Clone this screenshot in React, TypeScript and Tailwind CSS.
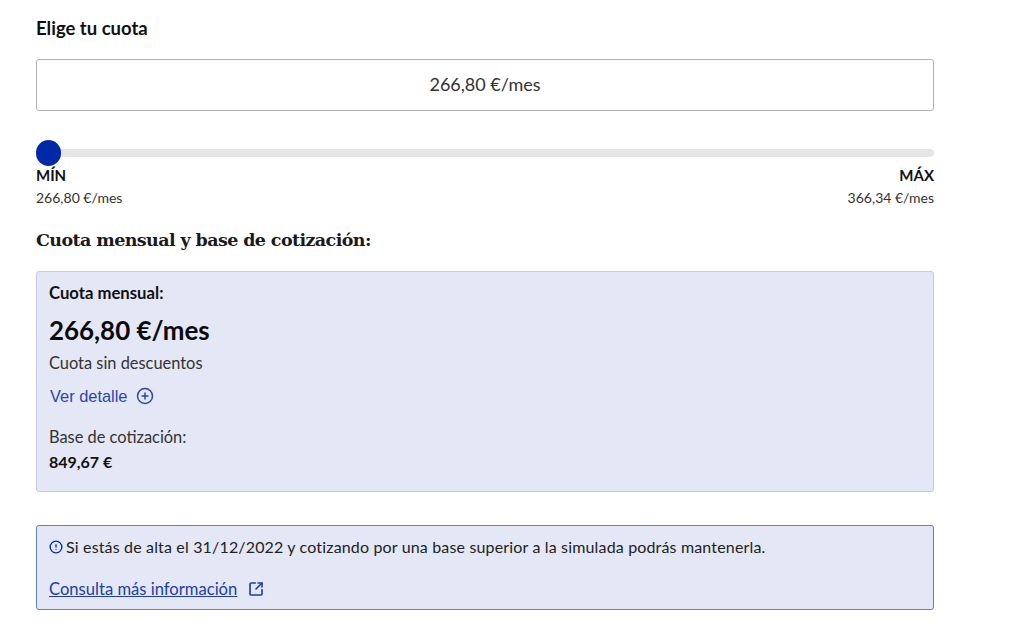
import { CirclePlus, CircleAlert, SquareArrowOutUpRight } from 'lucide-react'

export default function App() {
  return (
    <div className="w-[1024px] h-[637px] overflow-hidden bg-white pl-9 pt-[17px] font-['Lato',sans-serif] text-[#1a1a1a]">
      <div className="w-[898px]">
        <h2 className="text-[18.5px] leading-[22px] font-bold text-[#111]">Elige tu cuota</h2>

        {/* Importe */}
        <div className="mt-[20px] h-[52px] pb-[2px] flex items-center justify-center rounded-[3px] border border-[#b3b3b3] text-lg text-[#333]">
          266,80 €/mes
        </div>

        {/* Slider */}
        <div className="mt-[29px] h-[26px] flex items-center relative">
          <div className="w-full h-2 rounded-full bg-[#e5e5e5]" />
          <div className="absolute left-0 top-0 w-[25px] h-[26px] rounded-full bg-[#0029a8]" />
        </div>
        <div className="-mt-px flex justify-between">
          <div>
            <p className="text-[15px] leading-[20px] font-bold text-[#111]">MÍN</p>
            <p className="mt-[3px] text-sm leading-[20px] text-[#333]">266,80 €/mes</p>
          </div>
          <div className="text-right">
            <p className="text-[15px] leading-[20px] font-bold text-[#111]">MÁX</p>
            <p className="mt-[3px] text-sm leading-[20px] text-[#333]">366,34 €/mes</p>
          </div>
        </div>

        <h3 className="mt-[20px] text-[17.5px] leading-[24px] font-bold text-[#1a1a1a] font-['DejaVu_Serif',serif] tracking-[-0.6px]">
          Cuota mensual y base de cotización:
        </h3>

        {/* Cuota mensual */}
        <div className="mt-[19px] h-[221px] rounded-[3px] border border-[#c2cbea] bg-[#e4e7f6] px-3 pt-[11px]">
          <p className="text-[16.7px] leading-[20px] font-bold text-[#111]">Cuota mensual:</p>
          <p className="mt-[11px] text-[25.9px] leading-[32px] font-bold text-[#0a0a0a]">266,80 €/mes</p>
          <p className="mt-[7px] text-[16.4px] leading-[20px] text-[#333]">Cuota sin descuentos</p>
          <div className="mt-[13px] pl-px flex items-center gap-[9px] text-[#2a45b0]">
            <span className="font-['Liberation_Sans',sans-serif] text-[16.4px] leading-[20px]">Ver detalle</span>
            <CirclePlus size={18} strokeWidth={2} />
          </div>
          <p className="mt-[21px] text-[16.4px] leading-[20px] text-[#333]">Base de cotización:</p>
          <p className="mt-[5px] text-base leading-[20px] font-bold text-[#111]">849,67 €</p>
        </div>

        {/* Aviso */}
        <div className="mt-[33px] h-[85px] rounded-[3px] border border-[#5f7fd0] bg-[#e4e7f6] px-3 pt-[11px]">
          <div className="flex items-center gap-[3px] text-base tracking-[0.16px] leading-[20px] text-[#222]">
            <CircleAlert size={14} strokeWidth={2.25} className="text-[#0029a8] shrink-0" />
            <span>Si estás de alta el 31/12/2022 y cotizando por una base superior a la simulada podrás mantenerla.</span>
          </div>
          <div className="mt-[22px] flex items-center gap-[11px] text-[#2040a8]">
            <a className="text-[16.6px] leading-[20px] underline">Consulta más información</a>
            <SquareArrowOutUpRight size={16} strokeWidth={2.5} />
          </div>
        </div>
      </div>
    </div>
  )
}
